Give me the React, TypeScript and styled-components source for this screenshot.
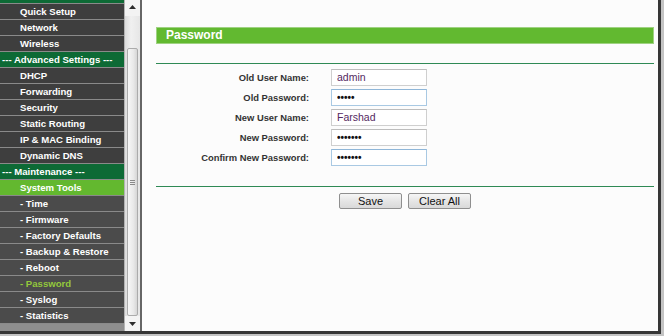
import styled, { createGlobalStyle } from 'styled-components';

type Tone = 'section' | 'item' | 'active' | 'sub' | 'current';

interface MenuEntry {
  label: string;
  tone: Tone;
}

const menu: MenuEntry[] = [
  { label: 'Quick Setup', tone: 'item' },
  { label: 'Network', tone: 'item' },
  { label: 'Wireless', tone: 'item' },
  { label: '--- Advanced Settings ---', tone: 'section' },
  { label: 'DHCP', tone: 'item' },
  { label: 'Forwarding', tone: 'item' },
  { label: 'Security', tone: 'item' },
  { label: 'Static Routing', tone: 'item' },
  { label: 'IP & MAC Binding', tone: 'item' },
  { label: 'Dynamic DNS', tone: 'item' },
  { label: '--- Maintenance ---', tone: 'section' },
  { label: 'System Tools', tone: 'active' },
  { label: '- Time', tone: 'sub' },
  { label: '- Firmware', tone: 'sub' },
  { label: '- Factory Defaults', tone: 'sub' },
  { label: '- Backup & Restore', tone: 'sub' },
  { label: '- Reboot', tone: 'sub' },
  { label: '- Password', tone: 'current' },
  { label: '- Syslog', tone: 'sub' },
  { label: '- Statistics', tone: 'sub' },
];

interface Field {
  label: string;
  type: 'text' | 'password';
  value: string;
  focused?: boolean;
}

const fields: Field[] = [
  { label: 'Old User Name:', type: 'text', value: 'admin' },
  { label: 'Old Password:', type: 'password', value: '12345', focused: true },
  { label: 'New User Name:', type: 'text', value: 'Farshad' },
  { label: 'New Password:', type: 'password', value: '1234567' },
  { label: 'Confirm New Password:', type: 'password', value: '1234567', focused: true },
];

const rowBg: Record<Tone, string> = {
  section: '#0d6a35',
  item: '#3e3e3e',
  active: '#63b82f',
  sub: '#4b4b4b',
  current: '#4b4b4b',
};

const GlobalStyle = createGlobalStyle`
  html, body {
    margin: 0;
    padding: 0;
  }
  body {
    width: 664px;
    height: 336px;
    overflow: hidden;
    background: #c4c4c4;
    font-family: "Liberation Sans", Arial, sans-serif;
  }
`;

const App = () => {
  return (
    <>
      <GlobalStyle />
      <Styled.Frame>
        <Styled.Sidebar>
          {/* the section header above is scrolled out of view, only its foot shows */}
          <Styled.ScrolledEdge />
          {menu.map((entry) => (
            <Styled.MenuRow key={entry.label} $tone={entry.tone}>
              {entry.label}
            </Styled.MenuRow>
          ))}
        </Styled.Sidebar>

        <Styled.Scrollbar>
          <Styled.UpButton>
            <svg width="7" height="4" viewBox="0 0 7 4">
              <path d="M0 4 L3.5 0 L7 4 Z" fill="#2b2b2b" />
            </svg>
          </Styled.UpButton>
          <Styled.Track>
            <Styled.Thumb>
              <Styled.Grip />
              <Styled.Grip />
              <Styled.Grip />
            </Styled.Thumb>
          </Styled.Track>
          <Styled.DownButton>
            <svg width="7" height="4" viewBox="0 0 7 4">
              <path d="M0 0 L3.5 4 L7 0 Z" fill="#2b2b2b" />
            </svg>
          </Styled.DownButton>
        </Styled.Scrollbar>

        <Styled.Content>
          <Styled.TitleBar>Password</Styled.TitleBar>
          <Styled.Rule />
          <Styled.Form>
            {fields.map((field) => (
              <Styled.FieldRow key={field.label}>
                <Styled.Label>{field.label}</Styled.Label>
                <Styled.Input
                  type={field.type}
                  defaultValue={field.value}
                  $focused={!!field.focused}
                  $secret={field.type === 'password'}
                />
              </Styled.FieldRow>
            ))}
          </Styled.Form>
          <Styled.Rule />
          <Styled.Buttons>
            <Styled.Button type="button">Save</Styled.Button>
            <Styled.Button type="button">Clear All</Styled.Button>
          </Styled.Buttons>
        </Styled.Content>
      </Styled.Frame>
    </>
  );
};

const Styled = {
  Frame: styled.div`
    display: flex;
    width: 658px;
    height: 331px;
    border-right: 3px solid #363636;
    border-bottom: 3px solid #363636;
  `,
  Sidebar: styled.nav`
    width: 124px;
    background: #8e8e8e;
    overflow: hidden;
  `,
  ScrolledEdge: styled.div`
    height: 3px;
    border-bottom: 1px solid #8a8a8a;
    background: #0d6a35;
  `,
  MenuRow: styled.div<{ $tone: Tone }>`
    height: 15px;
    line-height: 15px;
    border-bottom: 1px solid #8a8a8a;
    padding-left: ${(p) => (p.$tone === 'section' ? 2 : 20)}px;
    background: ${(p) => rowBg[p.$tone]};
    color: ${(p) => (p.$tone === 'current' ? '#93c83c' : '#ffffff')};
    font-size: 9.6px;
    font-weight: bold;
    white-space: nowrap;
    overflow: hidden;
  `,
  Scrollbar: styled.div`
    width: 15px;
    display: flex;
    flex-direction: column;
    border-left: 1px solid #b3b3b3;
    background: linear-gradient(to right, #dcdcdc, #f0f0f0 40%, #e6e6e6);
  `,
  UpButton: styled.div`
    box-sizing: border-box;
    height: 16px;
    padding-top: 5px;
    display: flex;
    justify-content: center;
    background: #f3f3f3;
  `,
  DownButton: styled.div`
    height: 15px;
    display: flex;
    align-items: center;
    justify-content: center;
    background: #f3f3f3;
  `,
  Track: styled.div`
    flex: 1;
    padding-top: 32px;
  `,
  Thumb: styled.div`
    box-sizing: border-box;
    height: 268px;
    margin: 0 2px;
    border: 1px solid #ababab;
    border-radius: 2px;
    background: linear-gradient(to right, #f7f7f7, #e9e9e9 60%, #d6d6d6);
    display: flex;
    flex-direction: column;
    align-items: center;
    justify-content: center;
    gap: 1px;
  `,
  Grip: styled.span`
    display: block;
    width: 5px;
    height: 1px;
    background: #8a8a8a;
  `,
  Content: styled.main`
    flex: 1;
    border-left: 2px solid #666666;
    background: #fcfcfc;
    padding: 27px 4px 0 14px;
  `,
  TitleBar: styled.h2`
    margin: 0;
    height: 15px;
    line-height: 15px;
    border: 1px solid #9fd282;
    background: #62b930;
    color: #ffffff;
    font-size: 12px;
    font-weight: bold;
    padding-left: 9px;
  `,
  Rule: styled.hr`
    margin: 19px 0 0;
    height: 0;
    border: 0;
    border-top: 1px solid #2f8a55;
  `,
  Form: styled.div`
    margin-top: 3px;
  `,
  FieldRow: styled.div`
    display: grid;
    grid-template-columns: 153px 96px;
    column-gap: 22px;
    height: 20px;
    align-items: center;
  `,
  Label: styled.label`
    text-align: right;
    font-size: 9.4px;
    font-weight: bold;
    color: #333333;
  `,
  Input: styled.input<{ $focused: boolean; $secret: boolean }>`
    box-sizing: border-box;
    width: 96px;
    height: 17px;
    margin: 0;
    padding: 0 5px;
    border: 1px solid ${(p) => (p.$focused ? '#a9c9e3' : '#cfcfcf')};
    border-top-color: ${(p) => (p.$focused ? '#8fb6d8' : '#bdbdbd')};
    background: #ffffff;
    font-family: "Liberation Sans", Arial, sans-serif;
    font-size: ${(p) => (p.$secret ? '10px' : '10.5px')};
    font-weight: ${(p) => (p.$secret ? 'bold' : 'normal')};
    color: ${(p) => (p.$secret ? '#111111' : '#54285f')};
    outline: none;
  `,
  Buttons: styled.div`
    display: flex;
    justify-content: center;
    gap: 6px;
    margin-top: 6px;
  `,
  Button: styled.button`
    box-sizing: border-box;
    width: 63px;
    height: 16px;
    padding: 0;
    border: 1px solid #8f8f8f;
    border-radius: 2px;
    background: linear-gradient(to bottom, #f6f6f6, #e4e4e4 55%, #d9d9d9);
    font-family: "Liberation Sans", Arial, sans-serif;
    font-size: 11px;
    line-height: 14px;
    color: #111111;
  `,
};

export default App;
